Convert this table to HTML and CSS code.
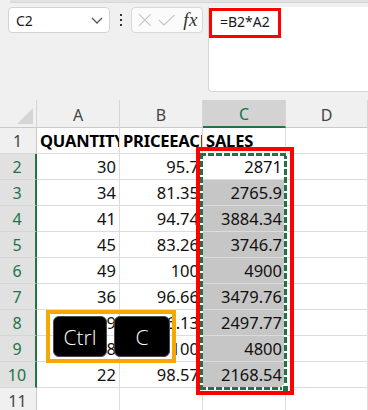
FILE: index.html
```html
<!DOCTYPE html>
<html>
<head>
<meta charset="utf-8">
<link rel="stylesheet" href="styles.css">
</head>
<body>
<div class="top-strip"></div>
<div class="toolbar">
  <div class="namebox">
    <span class="name">C2</span>
    <svg class="chev" width="12" height="7" viewBox="0 0 12 7"><path d="M1 1 L6 6 L11 1" fill="none" stroke="#555" stroke-width="1.3"/></svg>
  </div>
  <div class="dots"><i></i><i></i><i></i></div>
  <div class="fbtns">
    <svg width="14" height="14" viewBox="0 0 14 14"><path d="M1 1 L13 13 M13 1 L1 13" stroke="#c4c4c4" stroke-width="1.2" fill="none"/></svg>
    <svg width="18" height="12" viewBox="0 0 18 12"><path d="M1 6 L6 11 L17 1" stroke="#c4c4c4" stroke-width="1.2" fill="none"/></svg>
    <span class="fx">fx</span>
  </div>
  <div class="formula"><span class="ftext">=B2*A2</span></div>
</div>

<div class="sheet">
  <div class="grid">
    <div class="ch corner"></div><div class="ch">A</div><div class="ch">B</div><div class="ch csel">C</div><div class="ch">D</div>

    <div class="rh">1</div><div class="c b">QUANTITY</div><div class="c b">PRICEEACH</div><div class="c b">SALES</div><div class="c"></div>
    <div class="rh rsel">2</div><div class="c n">30</div><div class="c n">95.7</div><div class="c n">2871</div><div class="c"></div>
    <div class="rh rsel">3</div><div class="c n">34</div><div class="c n">81.35</div><div class="c n s">2765.9</div><div class="c"></div>
    <div class="rh rsel">4</div><div class="c n">41</div><div class="c n">94.74</div><div class="c n s">3884.34</div><div class="c"></div>
    <div class="rh rsel">5</div><div class="c n">45</div><div class="c n">83.26</div><div class="c n s">3746.7</div><div class="c"></div>
    <div class="rh rsel">6</div><div class="c n">49</div><div class="c n">100</div><div class="c n s">4900</div><div class="c"></div>
    <div class="rh rsel">7</div><div class="c n">36</div><div class="c n">96.66</div><div class="c n s">3479.76</div><div class="c"></div>
    <div class="rh rsel">8</div><div class="c n">29</div><div class="c n">86.13</div><div class="c n s">2497.77</div><div class="c"></div>
    <div class="rh rsel">9</div><div class="c n">48</div><div class="c n">100</div><div class="c n s">4800</div><div class="c"></div>
    <div class="rh rsel">10</div><div class="c n">22</div><div class="c n">98.57</div><div class="c n s">2168.54</div><div class="c"></div>
    <div class="rh">11</div><div class="c"></div><div class="c"></div><div class="c"></div><div class="c"></div>
  </div>

  <div class="ants"></div>
  <div class="redbox"></div>
  <div class="keys">
    <div class="key">Ctrl</div>
    <div class="key">C</div>
  </div>
</div>
</body>
</html>
```
FILE: styles.css
```css
* { box-sizing: border-box; }
html, body {
  margin: 0;
  padding: 0;
  width: 368px;
  height: 410px;
  overflow: hidden;
  background: #f0f0f0;
  font-family: "Noto Sans", "Open Sans", sans-serif;
  color: #1a1a1a;
}
.top-strip {
  height: 3px;
  margin-left: 10px;
  background: #e2e2e2;
  border-bottom: 1px solid #d8d8d8;
}
.toolbar {
  display: flex;
  align-items: flex-start;
  padding: 4px 0 0 8px;
  height: 93px;
}
.namebox {
  width: 102px;
  height: 26px;
  background: #fff;
  border: 1px solid #d3d3d3;
  border-radius: 4px;
  display: flex;
  align-items: center;
  justify-content: space-between;
  padding: 0 6px 0 7px;
}
.name { font-size: 14px; color: #1a1a1a; }
.chev { margin-top: 1px; }
.dots {
  width: 21px;
  height: 26px;
  display: flex;
  flex-direction: column;
  align-items: center;
  justify-content: center;
  gap: 3px;
}
.dots i { display: block; width: 2px; height: 2px; background: #333; }
.fbtns {
  width: 72px;
  height: 26px;
  background: #fbfbfb;
  border: 1px solid #d8d8d8;
  border-radius: 4px;
  display: flex;
  align-items: center;
  padding: 0 4px 0 6px;
  gap: 6px;
}
.fx {
  font-family: "Liberation Serif", "DejaVu Serif", serif;
  font-style: italic;
  font-size: 19px;
  color: #333;
  margin-left: 2px;
  letter-spacing: 0.5px;
}
.formula {
  flex: 1;
  height: 85px;
  margin-left: 5px;
  background: #fff;
  border-left: 1px solid #d6d6d6;
  border-bottom: 1px solid #d6d6d6;
  border-bottom-left-radius: 4px;
  padding: 1px 0 0 0;
}
.ftext {
  display: inline-block;
  width: 72px;
  height: 30px;
  border: 3px solid #ff0000;
  font-size: 14px;
  line-height: 22px;
  padding-left: 8px;
  color: #1a1a1a;
}

.sheet {
  position: relative;
  margin-top: 4px;
}
.grid {
  display: grid;
  grid-template-columns: 37px 83px 83px 83px 82px;
  grid-template-rows: 28px repeat(11, 26px);
}
.ch {
  background: #f0f0f0;
  border-right: 1px solid #d6d6d6;
  border-bottom: 1px solid #c9c9c9;
  display: flex;
  align-items: center;
  justify-content: center;
  font-size: 16px;
  color: #444;
  padding-top: 2px;
}
.ch.corner { position: relative; }
.ch.corner::after {
  content: "";
  position: absolute;
  left: 17px;
  top: 8px;
  width: 16px;
  height: 16px;
  background: #d5d5d5;
  clip-path: polygon(100% 0, 100% 100%, 0 100%);
}
.ch.csel {
  background: #d3d3d3;
  color: #217346;
  border-bottom: 2px solid #217346;
}
.rh {
  background: #f0f0f0;
  border-right: 1px solid #c9c9c9;
  border-bottom: 1px solid #d6d6d6;
  display: flex;
  align-items: center;
  justify-content: center;
  font-size: 16px;
  color: #444;
  padding-right: 1px;
}
.rh.rsel {
  background: #e1e1e1;
  color: #217346;
  border-right: 2px solid #217346;
}
.c {
  background: #fff;
  border-right: 1px solid #dcdcdc;
  border-bottom: 1px solid #dcdcdc;
  font-size: 16.5px;
  line-height: 25px;
  white-space: nowrap;
  overflow: hidden;
  color: #111;
}
.c.n { text-align: right; padding-right: 3px; }
.c.b { font-weight: 700; padding-left: 3px; font-size: 16.5px; letter-spacing: -0.2px; color: #000; }
.c.s { background: #c6c6c6; }

.ants {
  position: absolute;
  left: 200px;
  top: 53px;
  width: 87px;
  height: 237px;
  background:
    repeating-linear-gradient(90deg, #217346 0 6px, #fff 6px 8px) top left / 100% 3px no-repeat,
    repeating-linear-gradient(90deg, #217346 0 6px, #fff 6px 8px) bottom left / 100% 3px no-repeat,
    repeating-linear-gradient(180deg, #217346 0 6px, #fff 6px 8px) top left / 3px 100% no-repeat,
    repeating-linear-gradient(180deg, #217346 0 6px, #fff 6px 8px) top right / 3px 100% no-repeat;
}
.ants::after {
  content: "";
  position: absolute;
  right: -2px;
  bottom: -2px;
  width: 5px;
  height: 5px;
  background: #217346;
  border: 1px solid #fff;
}
.redbox {
  position: absolute;
  left: 196px;
  top: 47px;
  width: 98px;
  height: 248px;
  border: 4px solid #ff0000;
}
.keys {
  position: absolute;
  left: 46px;
  top: 210px;
  width: 130px;
  height: 53px;
  border: 4px solid #f5a800;
  display: flex;
  gap: 7px;
  padding: 2px 2px 2px 3px;
}
.key {
  width: 54px;
  height: 41px;
  background: #000;
  border: 1px solid #4a4a4a;
  border-radius: 6px;
  color: #fff;
  font-family: "Open Sans", "Noto Sans", sans-serif;
  font-weight: 300;
  font-size: 21px;
  display: flex;
  align-items: center;
  justify-content: center;
}
.key + .key { width: 56px; }
```
